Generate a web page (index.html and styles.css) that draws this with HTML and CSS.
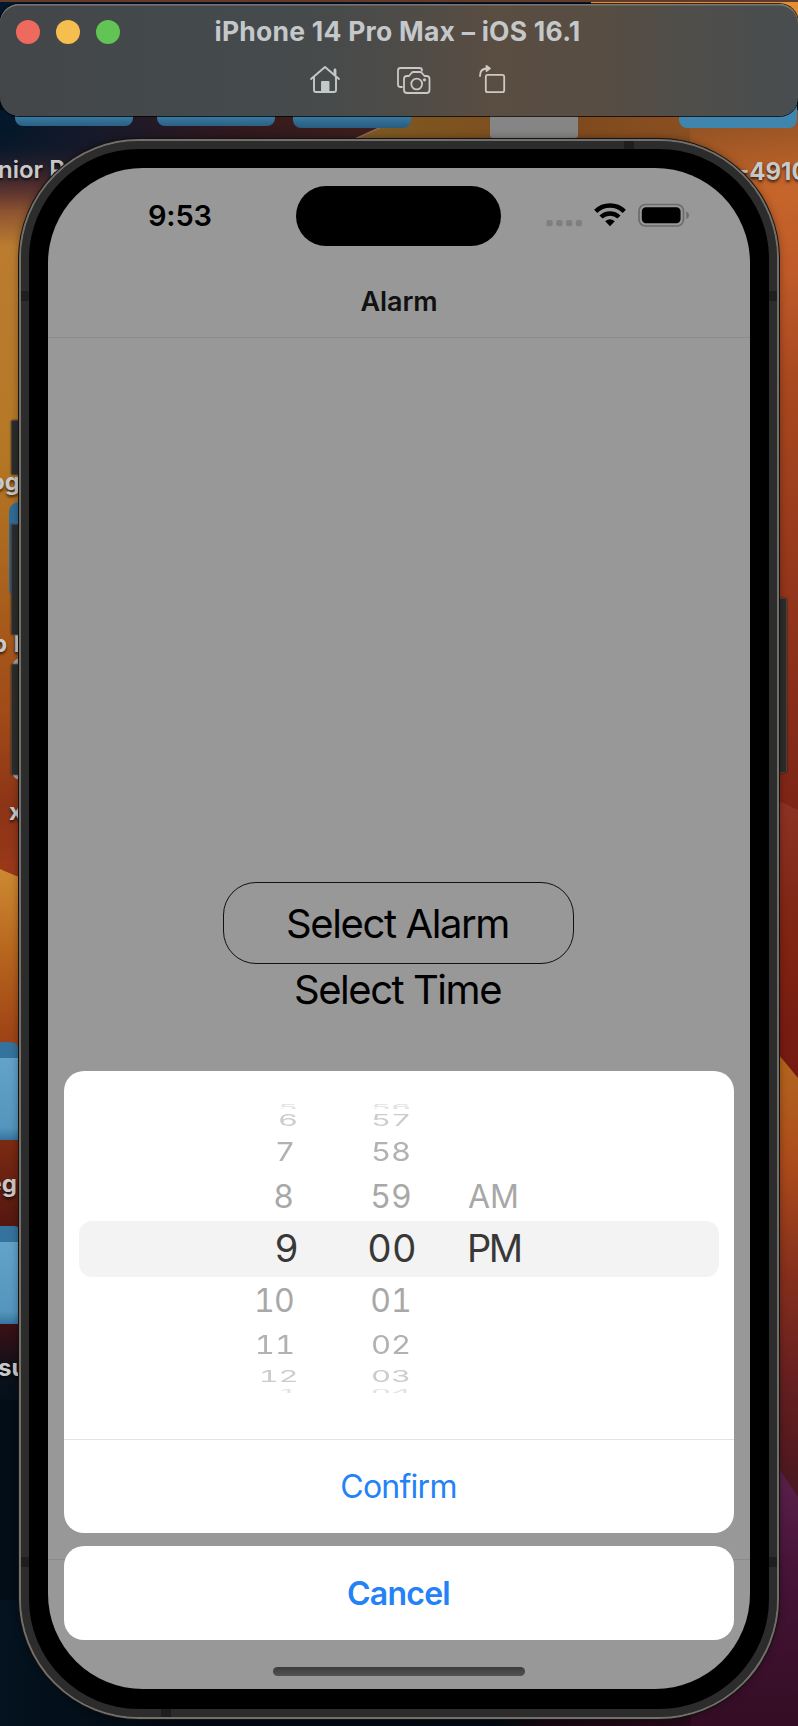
FILE: index.html
```html
<!DOCTYPE html>
<html lang="en">
<head>
<meta charset="utf-8">
<title>iPhone 14 Pro Max – iOS 16.1</title>
<link rel="stylesheet" href="styles.css">
</head>
<body>
<div class="desktop">
  <svg class="wallpaper" viewBox="0 0 798 1726" width="798" height="1726" aria-hidden="true">
    <defs>
      <linearGradient id="left" gradientUnits="userSpaceOnUse" x1="0" y1="110" x2="0" y2="868">
        <stop offset="0" stop-color="#03182c"/><stop offset=".05" stop-color="#191a2a"/><stop offset=".1" stop-color="#6b3630"/><stop offset=".18" stop-color="#bb7c31"/><stop offset=".45" stop-color="#b47825"/><stop offset=".62" stop-color="#aa621d"/><stop offset=".8" stop-color="#a04a18"/><stop offset=".92" stop-color="#8c3417"/><stop offset="1" stop-color="#983819"/>
      </linearGradient>
      <linearGradient id="top" gradientUnits="userSpaceOnUse" x1="0" y1="0" x2="420" y2="0">
        <stop offset="0" stop-color="#03182c"/><stop offset=".3" stop-color="#1f1a28"/><stop offset=".55" stop-color="#35191d"/><stop offset="1" stop-color="#4a2219"/>
      </linearGradient>
      <linearGradient id="topFade" gradientUnits="userSpaceOnUse" x1="0" y1="120" x2="0" y2="210">
        <stop offset="0" stop-color="#fff"/><stop offset="1" stop-color="#000"/>
      </linearGradient>
      <mask id="topMask"><rect width="420" height="210" fill="url(#topFade)"/></mask>
      <linearGradient id="gold" gradientUnits="userSpaceOnUse" x1="350" y1="0" x2="798" y2="0">
        <stop offset="0" stop-color="#7d5a22"/><stop offset=".5" stop-color="#7e4a1d"/><stop offset=".8" stop-color="#8c5022"/><stop offset="1" stop-color="#c06a2c"/>
      </linearGradient>
      <linearGradient id="right" gradientUnits="userSpaceOnUse" x1="690" y1="116" x2="780" y2="805">
        <stop offset="0" stop-color="#8c5022"/><stop offset=".12" stop-color="#c5652b"/><stop offset=".24" stop-color="#c05a29"/><stop offset=".4" stop-color="#a8481f"/><stop offset=".7" stop-color="#93351b"/><stop offset="1" stop-color="#7e2517"/>
      </linearGradient>
      <linearGradient id="crimson" gradientUnits="userSpaceOnUse" x1="0" y1="800" x2="0" y2="1075">
        <stop offset="0" stop-color="#8c3325"/><stop offset=".5" stop-color="#802413"/><stop offset="1" stop-color="#751912"/>
      </linearGradient>
      <linearGradient id="amber" gradientUnits="userSpaceOnUse" x1="0" y1="1055" x2="0" y2="1490">
        <stop offset="0" stop-color="#b5661f"/><stop offset=".25" stop-color="#ab4b1b"/><stop offset=".5" stop-color="#86301d"/><stop offset=".75" stop-color="#661f1f"/><stop offset="1" stop-color="#4a1820"/>
      </linearGradient>
      <linearGradient id="purple" gradientUnits="userSpaceOnUse" x1="0" y1="1470" x2="0" y2="1726">
        <stop offset="0" stop-color="#5b214b"/><stop offset=".4" stop-color="#461437"/><stop offset="1" stop-color="#340d24"/>
      </linearGradient>
      <linearGradient id="wedge" gradientUnits="userSpaceOnUse" x1="0" y1="868" x2="0" y2="1400">
        <stop offset="0" stop-color="#cd8a32"/><stop offset=".15" stop-color="#b8681f"/><stop offset=".32" stop-color="#9e4316"/><stop offset=".52" stop-color="#7a2912"/><stop offset=".66" stop-color="#561810"/><stop offset=".86" stop-color="#3a1014"/><stop offset=".95" stop-color="#0c1019"/><stop offset="1" stop-color="#03111c"/>
      </linearGradient>
      <linearGradient id="bottom" gradientUnits="userSpaceOnUse" x1="0" y1="0" x2="798" y2="0">
        <stop offset="0" stop-color="#04131f"/><stop offset=".25" stop-color="#010810"/><stop offset=".62" stop-color="#010a12"/><stop offset=".68" stop-color="#16060f"/><stop offset="1" stop-color="#340d24"/>
      </linearGradient>
      <linearGradient id="folder" x1="0" y1="0" x2="0" y2="1">
        <stop offset="0" stop-color="#63a3c8"/><stop offset=".85" stop-color="#5495bd"/><stop offset="1" stop-color="#34749f"/>
      </linearGradient>
      <linearGradient id="lip" gradientUnits="userSpaceOnUse" x1="0" y1="116" x2="0" y2="128">
        <stop offset="0" stop-color="#3a7ba1"/><stop offset="1" stop-color="#295b80"/>
      </linearGradient>
    </defs>
    <rect width="798" height="1726" fill="#020d18"/>
    <rect y="110" width="400" height="760" fill="url(#left)"/>
    <rect y="110" width="420" height="100" fill="url(#top)" mask="url(#topMask)"/>
    <path d="M0 860H120V920L0 869Z" fill="#983819"/>
    <path d="M0 869L60 894V1400H0Z" fill="url(#wedge)"/>
    <path d="M355 139L410 114H700V220H355Z" fill="url(#gold)"/>
    <path d="M355 139L410 114" stroke="#8a6654" stroke-width="1.5"/>
    <rect x="690" y="110" width="108" height="700" fill="url(#right)"/>
    <path d="M740 783L798 810V1080H740Z" fill="url(#crimson)"/>
    <path d="M740 1008L798 1078V1500H740Z" fill="url(#amber)"/>
    <rect y="1600" width="798" height="126" fill="url(#bottom)"/>
    <path d="M740 1410L798 1497V1726H690Z" fill="url(#purple)"/>
    <rect width="798" height="2" fill="#63392a"/>
    <rect y="2" width="591" height="20" fill="#03182c"/>
    <rect x="591" y="2" width="207" height="20" fill="#e28e35"/>
    <g fill="url(#lip)">
      <rect x="15" y="60" width="118" height="66" rx="8"/>
      <rect x="157" y="60" width="118" height="66" rx="8"/>
      <rect x="293" y="60" width="118" height="68" rx="8"/>
    </g>
    <rect x="679" y="60" width="118" height="68" rx="8" fill="#3f85ae"/>
    <rect x="490" y="90" width="88" height="48" rx="3" fill="#858585"/>
    <rect x="9" y="502" width="40" height="97" rx="10" fill="#2f6c98"/>
    <path d="M11 599V530q0-9 10-9v78Z" fill="#397ba8"/>
    <path d="M13 664q2-6 7-5v5ZM13 775q2 5 7 4v-4Z" fill="#a5a5a5"/>
    <path d="M0 1042H9q8 0 11 6V1060H0Z" fill="#34739d"/>
    <rect y="1058" width="22" height="82" fill="url(#folder)"/>
    <path d="M0 1226H13q6 0 9 4V1244H0Z" fill="#34739d"/>
    <rect y="1242" width="22" height="82" fill="url(#folder)"/>
  </svg>
  <span class="label label-senior">nior P</span>
  <span class="label label-number">-4910</span>
  <span class="label label-og">og</span>
  <span class="label label-pl">p l</span>
  <span class="label label-x">x</span>
  <span class="label label-eg">eg</span>
  <span class="label label-su">su</span>

  <header class="toolbar">
    <div class="titlebar">
      <div class="lights"><i class="light red"></i><i class="light yellow"></i><i class="light green"></i></div>
      <h1 class="title"><span>iPhone 14 Pro Max – iOS 16.1</span></h1>
    </div>
    <div class="tools">
      <svg width="32" height="30" viewBox="309 65 32 30" fill="none" stroke="#c3c8ca" stroke-width="1.9" stroke-linecap="round" stroke-linejoin="round">
        <path d="M311 79L325 67L339 79M314 77V90q0 2 2 2H334q2 0 2-2V77"/><path d="M335 70V75" stroke-width="2.8"/><path d="M322 82h6.500v10h-6.500Z" fill="#c3c8ca"/>
      </svg>
      <svg width="36" height="30" viewBox="396 65 36 30" fill="none" stroke="#c8c8c6" stroke-width="1.800" stroke-linecap="round" stroke-linejoin="round">
        <path d="M402 87H400.500q-2.500 0-2.500-2.500V70.500q0-2.500 2.500-2.500H419.500q2.500 0 2.500 2.500"/>
        <path d="M404 79q0-3 3-3h2l2.500-3q.7-1 2-1h6.500q1.300 0 2 1l2.500 3h2q3 0 3 3V90q0 3-3 3H407q-3 0-3-3Z"/><circle cx="416.700" cy="84" r="5.400"/><circle cx="424.500" cy="79.800" r=".7" fill="#c8c8c6"/>
      </svg>
      <svg width="28" height="30" viewBox="478 64 28 30" fill="none" stroke="#cfc9c3" stroke-width="1.800" stroke-linecap="round" stroke-linejoin="round">
        <rect x="485.800" y="74.800" width="18.400" height="17.400" rx="2"/><path d="M480 76q0-7.500 7-7.500"/><path d="M486.500 66L490 68.400L486.500 71Z" fill="#cfc9c3"/>
      </svg>
    </div>
  </header>

  <i class="key key-mute"></i><i class="key key-up"></i><i class="key key-down"></i><i class="key key-power"></i>
  <div class="phone">
    <i class="band band-tl"></i><i class="band band-tr"></i><i class="band band-bl"></i><i class="band band-br"></i><i class="band band-top"></i><i class="band band-bottom"></i>
    <main class="screen">
      <div class="status">
        <span class="clock">9:53</span>
        <span class="island"></span>
        <span class="signals">
          <svg width="146" height="30" viewBox="544 200 146 30">
            <g fill="#7f7f7f"><rect x="546.500" y="220" width="6.200" height="6.200" rx="1.800"/><rect x="556.300" y="220" width="6.200" height="6.200" rx="1.800"/><rect x="566" y="220" width="6.200" height="6.200" rx="1.800"/><rect x="575.800" y="220" width="6.200" height="6.200" rx="1.800"/></g>
            <g fill="none" stroke="#000" stroke-width="4.500"><path d="M595.700 211.400A20.500 20.500 0 0 1 624.300 211.400"/><path d="M601 217A13 13 0 0 1 619 217"/></g>
            <path d="M610 226.200L605.200 221.300Q610 217 614.800 221.300Z"/>
            <rect x="639" y="204.500" width="44.500" height="21.500" rx="6.500" fill="none" stroke="#6b6b6b" stroke-width="1.700"/><rect x="641.800" y="207.200" width="38.800" height="16" rx="4.200"/><path d="M686.300 211.500q2.700 1 2.700 3.700t-2.700 3.700Z" fill="#6b6b6b"/>
          </svg>
        </span>
      </div>
      <div class="navbar">Alarm</div>
      <div class="content">
        <div class="select-alarm"><span>Select Alarm</span></div>
        <div class="select-time"><span>Select Time</span></div>
      </div>
      <section class="sheet">
        <div class="picker">
          <div class="row far4"><b class="h">5</b><b class="m">56</b></div>
          <div class="row far3"><b class="h">6</b><b class="m">57</b></div>
          <div class="row far2"><b class="h">7</b><b class="m">58</b></div>
          <div class="row far1"><b class="h">8</b><b class="m">59</b><b class="p">AM</b></div>
          <div class="row current"><b class="h">9</b><b class="m">00</b><b class="p">PM</b></div>
          <div class="row near1"><b class="h">10</b><b class="m">01</b></div>
          <div class="row near2"><b class="h">11</b><b class="m">02</b></div>
          <div class="row near3"><b class="h">12</b><b class="m">03</b></div>
          <div class="row near4"><b class="h">1</b><b class="m">04</b></div>
        </div>
        <div class="confirm"><span>Confirm</span></div>
      </section>
      <div class="cancel-area"><div class="cancel"><span>Cancel</span></div></div>
      <div class="home"></div>
    </main>
  </div>
</div>
</body>
</html>
```
FILE: styles.css
```css
* { box-sizing: border-box; }
body { margin: 0; font-family: Inter, "Liberation Sans", sans-serif; }
.desktop { position: relative; width: 798px; height: 1726px; overflow: hidden; padding: 4px 0 0; }
.wallpaper { position: absolute; inset: 0; display: block; }

.label { position: absolute; font-size: 24px; line-height: 30px; font-weight: 700; color: #c9c9c9; white-space: nowrap; text-shadow: 0 2px 3px rgba(0,0,0,.7); }
.label-senior { left: -2px; top: 155px; font-weight: 600; }
.label-number { left: 738px; top: 157px; }
.label-og { right: 778px; top: 467px; }
.label-pl { left: -8px; top: 629px; letter-spacing: .5px; }
.label-x { left: 9px; top: 797px; }
.label-eg { right: 781px; top: 1169px; }
.label-su { left: -2px; top: 1353px; }

.toolbar { position: relative; height: 112px; border-radius: 19px; background: linear-gradient(90deg, #434749 0%, #454a4c 35%, #4b4b49 47%, #5a4d42 62%, #574d43 75%, #4e4e4b 88%, #494d4f 100%); box-shadow: inset 0 1.500px 0 #777, 0 0 0 1px rgba(0,0,0,.75); }
.titlebar { display: flex; align-items: center; height: 56px; padding: 0 16px; }
.lights { display: flex; gap: 16px; width: 104px; }
.light { width: 24px; height: 24px; border-radius: 50%; }
.red { background: #ee6a5f; }
.yellow { background: #f5be4f; }
.green { background: #61c455; }
.title { flex: 1; margin: 0 107px 0 0; padding-bottom: 3px; text-align: center; font-size: 26.500px; line-height: 32px; font-weight: 700; white-space: nowrap; color: #c4c8ca; letter-spacing: .24px; }
.tools { display: flex; align-items: flex-start; padding: 5px 0 0 309px; }
.tools svg + svg { margin-left: 55px; }
.tools svg + svg + svg { margin-left: 46px; margin-top: -1px; }

.key { position: absolute; left: 11px; width: 10px; background: #2c2c2c; border: 1px solid #45433a; border-radius: 2px 0 0 2px; box-shadow: 0 0 2px rgba(0,0,0,.7); }
.key-mute { top: 420px; height: 55px; }
.key-up { top: 524px; height: 111px; }
.key-down { top: 664px; height: 111px; }
.key-power { left: 777px; top: 598px; height: 175px; border-radius: 0 2px 2px 0; }

.phone { position: relative; width: 760px; height: 1580px; margin: 23px 0 0 19px; border-radius: 120px; background: #000; border: 2px solid #73706c; padding: 27px; box-shadow: 0 0 0 1px #151210, 0 0 8px rgba(0,0,0,.4), inset 0 0 0 8px #2c2c2c; }
.band { position: absolute; background: #1e1e1e; width: 8px; height: 10px; }
.band-tl { left: 0; top: 150px; }
.band-tr { right: 0; top: 150px; }
.band-bl { left: 0; top: 1416px; }
.band-br { right: 0; top: 1416px; }
.band-top { width: 10px; height: 8px; left: 603px; top: 0; }
.band-bottom { width: 10px; height: 8px; left: 140px; bottom: 0; }

.screen { display: flex; flex-direction: column; width: 702px; height: 1521px; border-radius: 95px; overflow: hidden; background: #989898; color: #000; }
.status { display: flex; align-items: flex-start; height: 104px; flex: none; }
.clock { width: 248px; padding: 30px 0 0 100px; font-size: 29px; line-height: 36px; font-weight: 600; letter-spacing: -.2px; }
.island { width: 205px; height: 60px; margin-top: 18px; border-radius: 30px; background: #000; }
.signals { margin: 32px 0 0 43px; }
.signals svg { display: block; }
.navbar { flex: none; height: 66px; padding-top: 12px; text-align: center; font-size: 27px; line-height: 36px; font-weight: 600; letter-spacing: -.1px; color: #111; border-bottom: 1px solid #8b8b8b; }
.content { display: flex; flex-direction: column; align-items: center; height: 733px; flex: none; padding: 544px 1px 0 0; }
.select-alarm { width: 351px; height: 82px; border: 1px solid #111; border-radius: 33px; text-align: center; font-size: 40px; line-height: 82px; letter-spacing: -1.400px; text-indent: -2px; }
.select-time { font-size: 40px; line-height: 52px; letter-spacing: -1.450px; text-indent: -2px; }

.sheet { flex: none; width: 670px; height: 462px; margin-left: 16px; border-radius: 20px; background: #fff; }
.picker { height: 368px; padding-top: 30px; }
.row { display: grid; grid-template-columns: 234px 160px 1fr; align-items: center; overflow: hidden; }
.row b { font-weight: 400; display: block; line-height: 46px; font-variant-numeric: tabular-nums; }
.h { text-align: right; }
.m { text-align: center; margin-left: 63px; width: 60px; justify-self: start; }
.p { padding-left: 10px; }
.far4 { height: 8px; font-size: 31px; color: #e2e2e2; }
.far3 { height: 22px; font-size: 31px; color: #ccc; }
.far2 { height: 42px; font-size: 31px; color: #b2b2b2; }
.far1 { height: 48px; font-size: 32px; color: #a8a8a8; }
.current { height: 56px; margin: 0 15px; border-radius: 13px; background: #f3f3f3; font-size: 38px; line-height: 44px; color: #383838; grid-template-columns: 220px 159px 1fr; }
.current b { line-height: 44px; margin-top: -2px; }
.current .p { letter-spacing: -2.400px; padding-left: 9px; }
.near1 { height: 48px; font-size: 32px; color: #a8a8a8; }
.near2 { height: 40px; font-size: 31px; color: #b2b2b2; }
.near3 { height: 22px; font-size: 31px; color: #ccc; }
.near4 { height: 6px; font-size: 31px; color: #e2e2e2; }
.far1 .h { padding-right: 4px; }
.near1 .h { padding-right: 4px; letter-spacing: -.8px; }
.far2 .h, .near2 .h { padding-right: 3px; }
.near3 .h { letter-spacing: -.5px; }
.far3 b, .near3 b { transform: scaleY(.53); margin-top: -12px; margin-bottom: -12px; }
.far2 b, .near2 b { transform: scaleY(.84); margin-top: -3px; margin-bottom: -3px; }
.far4 b { transform: translateY(2px) scaleY(.26); margin-top: -20px; margin-bottom: -20px; }
.near4 b { transform: translateY(2px) scaleY(.24); margin-top: -20px; margin-bottom: -20px; }
.confirm { height: 94px; border-top: 1.500px solid #e3e3e3; text-align: center; font-size: 32px; line-height: 93px; color: #2382f6; letter-spacing: -.75px; text-indent: -1px; }
.cancel-area { flex: none; height: 107px; padding: 13px 0 0 16px; background: linear-gradient(#8b8b8b, #8b8b8b) 0 26px / 100% 1px no-repeat; }
.cancel { width: 670px; height: 94px; border-radius: 20px; background: #fff; text-align: center; font-size: 32px; line-height: 95px; font-weight: 600; color: #2382f6; letter-spacing: -.75px; text-indent: -1px; }
.home { flex: none; width: 252px; height: 9px; margin: 27px auto 0; border-radius: 5px; background: linear-gradient(#3c3c3c, #525252); }
```
